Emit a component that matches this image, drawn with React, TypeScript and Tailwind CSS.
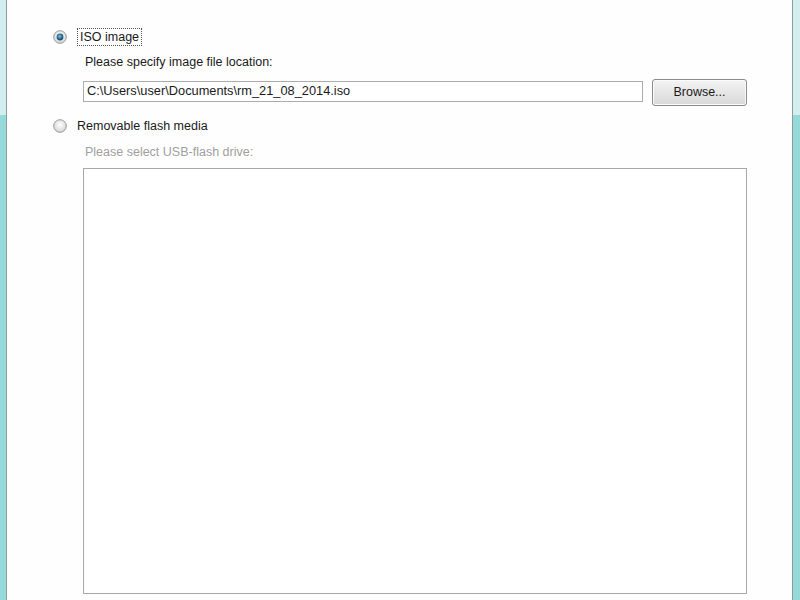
import React from "react";

function Radio({ checked }: { checked: boolean }) {
  return (
    <svg width="14" height="14" viewBox="0 0 14 14">
      <defs>
        <radialGradient id={checked ? "rgc" : "rgu"} cx="50%" cy="40%" r="60%">
          <stop offset="0%" stopColor="#ffffff" />
          <stop offset="100%" stopColor="#d4d4d4" />
        </radialGradient>
        <radialGradient id="dot" cx="45%" cy="40%" r="60%">
          <stop offset="0%" stopColor="#7fc4e6" />
          <stop offset="60%" stopColor="#2a6f96" />
          <stop offset="100%" stopColor="#1a4460" />
        </radialGradient>
      </defs>
      <circle cx="7" cy="7" r="6.3" fill={`url(#${checked ? "rgc" : "rgu"})`} stroke="#9a9a9a" strokeWidth="1" />
      {checked && <circle cx="7" cy="7" r="3.4" fill="url(#dot)" />}
    </svg>
  );
}

export default function App() {
  const font = { fontFamily: '"Liberation Sans", Arial, sans-serif' };
  return (
    <div className="w-[800px] h-[600px] flex bg-[#fefefe] overflow-hidden" style={font}>
      <div className="w-[6px] h-full flex flex-col">
        <div className="h-[115px] bg-[#d2eeee]" />
        <div className="flex-1 bg-[#96d9d9]" />
      </div>
      <div className="w-[1px] h-full bg-[#8c9c9c]" />
      <div className="flex-1 h-full flex flex-col pl-[46px] pr-[45px] text-[12.5px] text-[#1a1a1a]">
        <div className="mt-[28px] h-[18px] flex items-center">
          <div className="w-[24px] flex items-center"><Radio checked /></div>
          <div className="h-[18px] px-[2px] border border-dotted border-[#555] flex items-center leading-none">ISO image</div>
        </div>
        <div className="pl-[32px] mt-[9px] h-[14px] leading-[14px]">Please specify image file location:</div>
        <div className="pl-[30px] mt-[10px] flex items-start h-[27px]">
          <div className="flex-1 mt-[2px] h-[21px] border border-[#acacac] bg-white flex items-center pl-[3px] leading-none text-[12.8px]">
            C:\Users\user\Documents\rm_21_08_2014.iso
          </div>
          <div className="ml-[9px] w-[95px] h-[27px] rounded-[3px] border border-[#8a8a8a] bg-[linear-gradient(#f4f4f4,#e6e6e6_50%,#d8d8d8)] flex items-center justify-center leading-none shadow-[inset_0_0_0_1px_#fbfbfb]">
            Browse...
          </div>
        </div>
        <div className="mt-[11px] h-[18px] flex items-center">
          <div className="w-[24px] flex items-center"><Radio checked={false} /></div>
          <div className="pl-[0px] leading-none">Removable flash media</div>
        </div>
        <div className="pl-[32px] mt-[10px] h-[14px] leading-[14px] text-[#a0a0a0]">Please select USB-flash drive:</div>
        <div className="ml-[30px] mt-[9px] h-[426px] border border-[#a8a8a8] bg-white" />
      </div>
      <div className="w-[1px] h-full bg-[#8c9c9c]" />
      <div className="w-[7px] h-full flex flex-col">
        <div className="h-[115px] bg-[#d2eeee]" />
        <div className="flex-1 bg-[#96d9d9]" />
      </div>
    </div>
  );
}
